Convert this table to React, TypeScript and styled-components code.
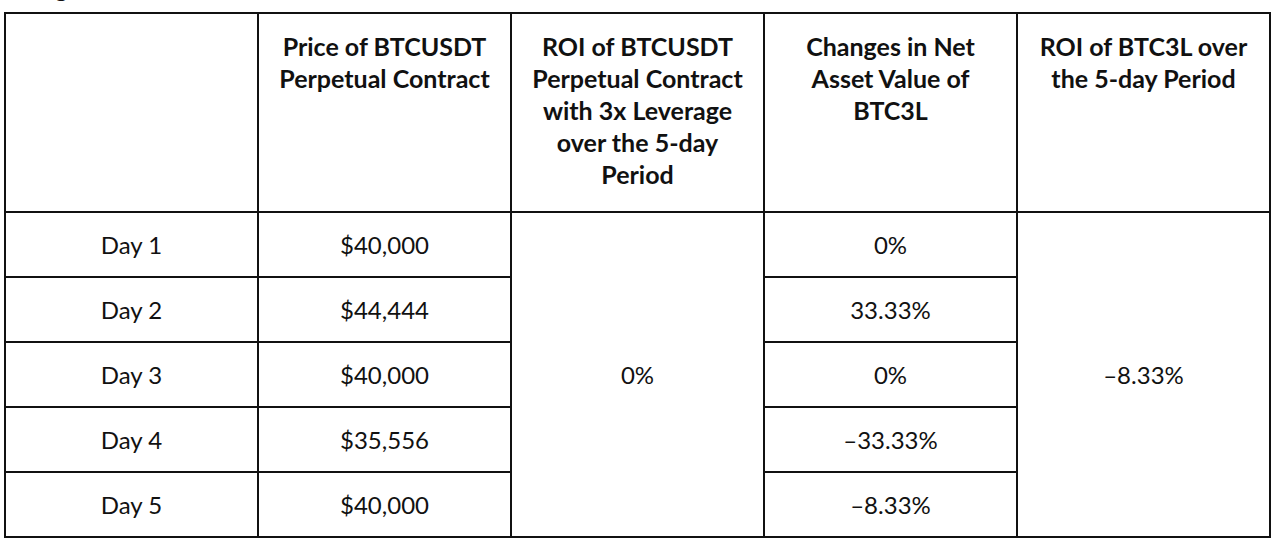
import React from "react";
import styled, { createGlobalStyle } from "styled-components";

const GlobalStyle = createGlobalStyle`
  html, body {
    margin: 0;
    padding: 0;
    background: #fff;
  }
  body {
    font-family: Lato, "Liberation Sans", sans-serif;
    color: #111;
  }
`;

const Page = styled.div`
  width: 1280px;
  height: 544px;
  overflow: hidden;
  padding: 0 0 0 4px;
  box-sizing: border-box;
`;

const Caption = styled.h3`
  margin: -27px 0 9px 0;
  padding-left: 10px;
  font-size: 24px;
  line-height: 30px;
  font-weight: 700;
`;

const Table = styled.table`
  width: 1267px;
  border-collapse: collapse;
  table-layout: fixed;
  border: 2px solid #111;
`;

const HeadCell = styled.th`
  height: 181px;
  padding: 16px 14px 0;
  vertical-align: top;
  border: 2px solid #111;
  font-size: 25px;
  line-height: 32px;
  font-weight: 700;
  text-align: center;
`;

const Cell = styled.td`
  height: 63px;
  padding: 0 10px;
  border: 2px solid #111;
  font-size: 24px;
  font-weight: 400;
  text-align: center;
  vertical-align: middle;
`;

const headers = [
  "",
  "Price of BTCUSDT Perpetual Contract",
  "ROI of BTCUSDT Perpetual Contract with 3x Leverage over the 5-day Period",
  "Changes in Net Asset Value of BTC3L",
  "ROI of BTC3L over the 5-day Period",
];

const rows = [
  { day: "Day 1", price: "$40,000", nav: "0%" },
  { day: "Day 2", price: "$44,444", nav: "33.33%" },
  { day: "Day 3", price: "$40,000", nav: "0%" },
  { day: "Day 4", price: "$35,556", nav: "\u201333.33%" },
  { day: "Day 5", price: "$40,000", nav: "\u20138.33%" },
];

const App = () => {
  return (
    <>
      <GlobalStyle />
      <Page>
        <Caption>Range-bound Market</Caption>
        <Table>
          <thead>
            <tr>
              {headers.map((h, i) => (
                <HeadCell key={i}>{h}</HeadCell>
              ))}
            </tr>
          </thead>
          <tbody>
            {rows.map((r, i) => (
              <tr key={r.day}>
                <Cell>{r.day}</Cell>
                <Cell>{r.price}</Cell>
                {i === 0 && <Cell rowSpan={5}>0%</Cell>}
                <Cell>{r.nav}</Cell>
                {i === 0 && <Cell rowSpan={5}>{"\u20138.33%"}</Cell>}
              </tr>
            ))}
          </tbody>
        </Table>
      </Page>
    </>
  );
};

export default App;
